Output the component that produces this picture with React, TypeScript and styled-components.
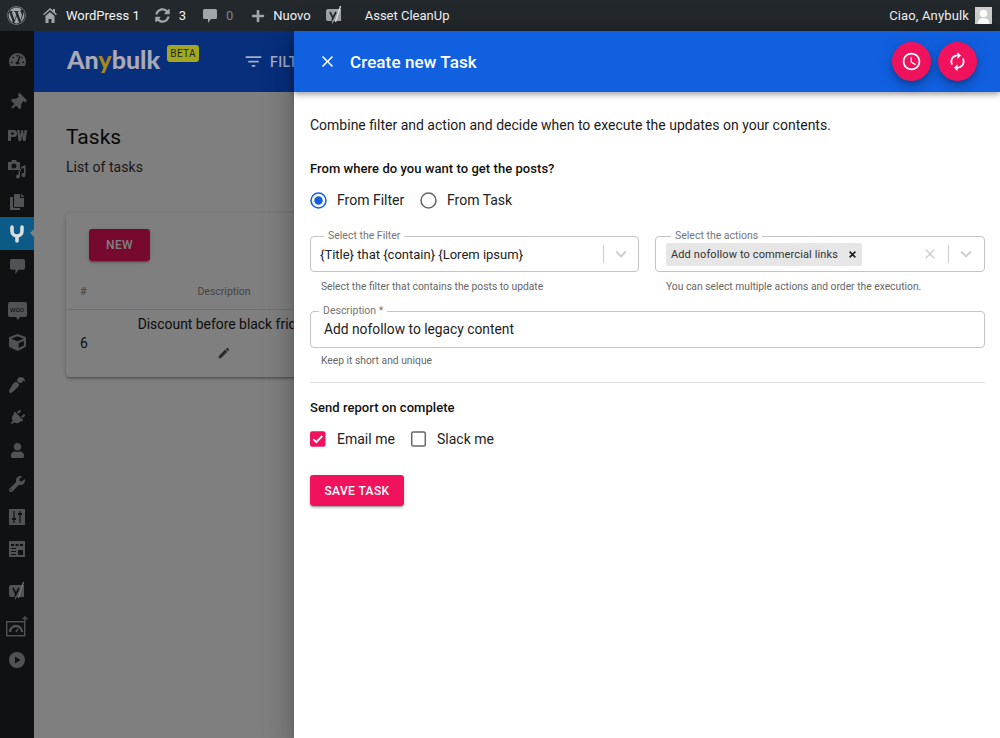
import React from "react";
import styled, { createGlobalStyle } from "styled-components";
import {
  FaCopy,
  FaCube,
  FaPaintBrush,
  FaPlug,
  FaPlus,
  FaSyncAlt,
  FaTachometerAlt,
  FaThumbtack,
  FaUser,
  FaWordpress,
  FaWrench,
} from "react-icons/fa";
import { MdAccessTime, MdAutorenew, MdClose, MdEdit, MdFilterList, MdKeyboardArrowDown } from "react-icons/md";

const GlobalStyle = createGlobalStyle`
  html, body {
    margin: 0;
    padding: 0;
    background: #fff;
    font-family: Roboto, "Liberation Sans", sans-serif;
  }
`;

const Page = styled.div`
  position: relative;
  width: 1000px;
  height: 738px;
  overflow: hidden;
  display: flex;
  flex-direction: column;
`;

const AdminBar = styled.div`
  height: 31px;
  flex: none;
  background: #23282d;
  display: flex;
  align-items: center;
  color: #f1f2f3;
  font-size: 13px;
  padding: 0 8px 0 7px;
`;

const BarItem = styled.span<{ $left?: number; $muted?: boolean }>`
  display: inline-flex;
  align-items: center;
  margin-left: ${props => props.$left ?? 0}px;
  color: ${props => (props.$muted ? "#7d8287" : "#f1f2f3")};
  svg {
    display: block;
    color: #a0a5aa;
  }
`;

const BarRight = styled.div`
  margin-left: auto;
  display: flex;
  align-items: center;
  gap: 6px;
  letter-spacing: 0.15px;
`;

const Avatar = styled.span`
  width: 17px;
  height: 17px;
  background: #cfcfcf;
  display: block;
  svg {
    display: block;
  }
`;

const Body = styled.div`
  flex: 1;
  display: flex;
  min-height: 0;
`;

const Sidebar = styled.nav`
  width: 34px;
  flex: none;
  background: #1f2327;
  padding-top: 12px;
  display: flex;
  flex-direction: column;
`;

const SideItem = styled.div<{ $top?: number; $active?: boolean; $tilt?: number }>`
  position: relative;
  z-index: ${props => (props.$active ? 2 : "auto")};
  height: 33px;
  flex: none;
  margin-top: ${props => props.$top ?? 0}px;
  display: flex;
  align-items: center;
  justify-content: center;
  background: ${props => (props.$active ? "#0c5a86" : "transparent")};
  color: ${props => (props.$active ? "#d8dde0" : "#a0a5aa")};
  svg {
    display: block;
    transform: rotate(${props => props.$tilt ?? 0}deg);
  }
`;

const ActiveArrow = styled.span`
  position: absolute;
  right: 0;
  top: 12px;
  border: 4px solid transparent;
  border-right-color: #7f7f7f;
  border-left-width: 0;
`;

const WooTag = styled.span`
  position: relative;
  font-family: "Liberation Sans", sans-serif;
  font-size: 7.5px;
  line-height: 15px;
  width: 19px;
  height: 15px;
  border-radius: 2px;
  background: #a0a5aa;
  color: #1f2327;
  text-align: center;
  &::after {
    content: "";
    position: absolute;
    left: 8px;
    bottom: -3px;
    border: 2px solid transparent;
    border-top-color: #a0a5aa;
    border-bottom-width: 0;
    border-top-width: 3px;
  }
`;

const Main = styled.main`
  flex: 1;
  min-width: 0;
  background: #fff;
  display: flex;
  flex-direction: column;
`;

const TopBar = styled.header`
  height: 61px;
  flex: none;
  background: #105ef8;
  display: flex;
  align-items: center;
  padding-left: 33px;
  color: #fff;
`;

// the logo stays brighter than the rest under the scrim
const Logo = styled.div`
  position: relative;
  z-index: 2;
  margin-bottom: 5px;
  font-family: Lato, sans-serif;
  font-weight: 900;
  font-size: 25px;
  color: #a9aab6;
  span {
    color: #a8861a;
  }
`;

const BetaBadge = styled.span`
  position: relative;
  z-index: 2;
  align-self: flex-start;
  margin: 14px 0 0 7px;
  width: 32px;
  height: 17px;
  border-radius: 3px;
  background: #a3a61f;
  color: #1c2a28;
  font-size: 10px;
  letter-spacing: 0.4px;
  line-height: 17px;
  text-align: center;
`;

const FilterLink = styled.div`
  position: relative;
  z-index: 2;
  display: flex;
  align-items: center;
  gap: 6px;
  margin-left: 44px;
  font-size: 14px;
  font-weight: 500;
  letter-spacing: 0.4px;
  white-space: nowrap;
  color: #a4adc6;
`;

const Content = styled.div`
  padding: 31px 0 0 32px;
`;

const PageTitle = styled.h1`
  margin: 0;
  font-size: 21px;
  line-height: 28px;
  font-weight: 400;
  color: #111;
`;

const PageSub = styled.p`
  margin: 6px 0 0;
  font-size: 14px;
  line-height: 20px;
  letter-spacing: 0.05px;
  color: #333;
`;

const Card = styled.section`
  margin-top: 36px;
  width: 520px;
  height: 164px;
  background: #fff;
  border-radius: 4px;
  box-shadow: 0 2px 2px rgba(0, 0, 0, 0.14), 0 3px 1px -2px rgba(0, 0, 0, 0.12), 0 1px 5px rgba(0, 0, 0, 0.2);
  padding-top: 16px;
  box-sizing: border-box;
`;

const NewButton = styled.button`
  display: block;
  margin-left: 23px;
  width: 61px;
  height: 32px;
  border: 0;
  border-radius: 3px;
  background: #f0125c;
  color: #fff;
  font: 500 12px Roboto, sans-serif;
  letter-spacing: 0.3px;
  box-shadow: 0 3px 1px -2px rgba(0, 0, 0, 0.2), 0 2px 2px rgba(0, 0, 0, 0.14), 0 1px 5px rgba(0, 0, 0, 0.12);
`;

const TableHead = styled.div`
  box-sizing: border-box;
  margin-top: 16px;
  height: 33px;
  padding: 0 0 4px 14px;
  display: grid;
  grid-template-columns: 58px 172px;
  align-items: center;
  border-bottom: 1px solid #e0e0e0;
  font-size: 10.5px;
  color: #8a8a8a;
`;

const TableRow = styled.div`
  height: 66px;
  display: grid;
  grid-template-columns: 58px 172px;
  align-items: center;
  padding-left: 14px;
  font-size: 13.9px;
  color: #1c1c1c;
`;

const HeadLabel = styled.span`
  text-align: center;
`;

const DescCell = styled.div`
  display: flex;
  flex-direction: column;
  align-items: center;
  gap: 12px;
  padding-bottom: 12px;
  line-height: 20px;
  white-space: nowrap;
  svg {
    display: block;
    color: #555;
  }
`;

const Scrim = styled.div`
  position: absolute;
  inset: 31px 0 0 0;
  z-index: 1;
  background: rgba(0, 0, 0, 0.5);
`;

const Drawer = styled.aside`
  position: absolute;
  z-index: 3;
  top: 31px;
  left: 294px;
  right: 0;
  bottom: 0;
  background: #fff;
  box-shadow: 0 8px 10px -5px rgba(0, 0, 0, 0.2), 0 16px 24px 2px rgba(0, 0, 0, 0.14), 0 6px 30px 5px rgba(0, 0, 0, 0.12);
`;

const DrawerHead = styled.header`
  height: 61px;
  background: #1160e0;
  display: flex;
  align-items: center;
  padding: 0 23px 0 24px;
  color: #fff;
  box-shadow: 0 2px 4px -1px rgba(0, 0, 0, 0.2), 0 4px 5px rgba(0, 0, 0, 0.14), 0 1px 10px rgba(0, 0, 0, 0.12);
  svg {
    display: block;
  }
`;

const DrawerTitle = styled.h2`
  margin: 0 0 0 13px;
  font-size: 17px;
  font-weight: 500;
  letter-spacing: 0.1px;
`;

const Fabs = styled.div`
  margin-left: auto;
  display: flex;
  gap: 7px;
`;

const Fab = styled.button`
  width: 39px;
  height: 39px;
  border: 0;
  padding: 0;
  border-radius: 50%;
  background: #f0125c;
  color: #fff;
  display: flex;
  align-items: center;
  justify-content: center;
  box-shadow: 0 3px 5px -1px rgba(0, 0, 0, 0.2), 0 6px 10px rgba(0, 0, 0, 0.14), 0 1px 18px rgba(0, 0, 0, 0.12);
`;

const Form = styled.div`
  padding: 23px 15px 0 16px;
`;

const Intro = styled.p`
  margin: 0;
  font-size: 14px;
  line-height: 20px;
  color: #1b1b1b;
`;

const SectionTitle = styled.h3<{ $top: number }>`
  margin: ${props => props.$top}px 0 0;
  font-size: 13px;
  line-height: 20px;
  font-weight: 500;
  letter-spacing: 0.05px;
  color: #111;
`;

const OptionRow = styled.div`
  margin-top: 9px;
  height: 24px;
  display: flex;
  align-items: center;
`;

const Option = styled.label<{ $width: number }>`
  width: ${props => props.$width}px;
  display: flex;
  align-items: center;
  gap: 10px;
  font-size: 14px;
  color: #222;
  svg {
    display: block;
    flex: none;
  }
`;

const FieldRow = styled.div`
  margin-top: 18px;
  display: grid;
  grid-template-columns: 329px 330px;
  justify-content: space-between;
`;

const Outlined = styled.fieldset<{ $top?: number }>`
  margin: ${props => props.$top ?? 0}px 0 0;
  padding: 0;
  min-width: 0;
  border: 1px solid #c4c4c4;
  border-radius: 4px;
`;

const Legend = styled.legend<{ $left: number }>`
  margin-left: ${props => props.$left}px;
  padding: 0 4px;
  font-size: 10.5px;
  line-height: 12px;
  color: #757575;
`;

const SelectBody = styled.div`
  box-sizing: border-box;
  height: 31px;
  margin-top: -2px;
  padding: 0 0 3px 9px;
  display: flex;
  align-items: center;
  font-size: 13px;
  color: #222;
`;

const Chip = styled.span`
  display: flex;
  align-items: center;
  justify-content: space-between;
  width: 196px;
  box-sizing: border-box;
  height: 23px;
  padding: 0 6px 0 5px;
  margin-left: 1px;
  border-radius: 2px;
  background: #e6e6e6;
  font-size: 11px;
  letter-spacing: 0.12px;
  color: #333;
  svg {
    display: block;
  }
`;

const Indicators = styled.div<{ $end: number }>`
  margin-left: auto;
  padding-right: ${props => props.$end}px;
  display: flex;
  align-items: center;
  color: #cccccc;
  svg {
    display: block;
  }
`;

const Separator = styled.span`
  width: 1px;
  height: 18px;
  background: #cccccc;
  margin: 0 6px 0 7px;
`;

const ClearIcon = styled(MdClose)`
  margin-right: 3px;
`;

const Helper = styled.p<{ $top?: number; $left?: number }>`
  margin: ${props => props.$top ?? 8}px 0 0 ${props => props.$left ?? 11}px;
  font-size: 10.3px;
  line-height: 14px;
  color: #666;
`;

const TextValue = styled.div`
  box-sizing: border-box;
  height: 33px;
  margin-top: -3px;
  padding: 0 0 3px 13px;
  display: flex;
  align-items: center;
  font-size: 13.8px;
  color: #1c1c1c;
`;

const Divider = styled.hr`
  margin: 14px 0 0;
  border: 0;
  height: 1px;
  background: #e0e0e0;
`;

const SaveButton = styled.button`
  display: block;
  margin-top: 24px;
  width: 94px;
  height: 31px;
  border: 0;
  border-radius: 3px;
  background: #f0125c;
  color: #fff;
  font: 500 12px Roboto, sans-serif;
  letter-spacing: 0.4px;
  box-shadow: 0 3px 1px -2px rgba(0, 0, 0, 0.2), 0 2px 2px rgba(0, 0, 0, 0.14), 0 1px 5px rgba(0, 0, 0, 0.12);
`;

function Radio({ checked }: { checked?: boolean }) {
  const color = checked ? "#1160e0" : "#666";
  return (
    <svg width="17" height="17" viewBox="0 0 17 17">
      <circle cx="8.5" cy="8.5" r="7.5" fill="none" stroke={color} strokeWidth="1.5" />
      {checked && <circle cx="8.5" cy="8.5" r="4.2" fill={color} />}
    </svg>
  );
}

function Checkbox({ checked }: { checked?: boolean }) {
  if (checked) {
    return (
      <svg width="17" height="16" viewBox="0 0 17 16">
        <rect y="0.3" width="15.5" height="15.5" rx="2" fill="#f0125c" />
        <path d="M3.3 8.2l3 3 6-6.2" fill="none" stroke="#fff" strokeWidth="1.8" />
      </svg>
    );
  }
  return (
    <svg width="17" height="16" viewBox="0 0 17 16">
      <rect x="1.7" y="1" width="13.6" height="14" rx="1.5" fill="none" stroke="#666" strokeWidth="1.5" />
    </svg>
  );
}

function ChipCross() {
  return (
    <svg width="7" height="7" viewBox="0 0 7 7" fill="none" stroke="#1c1c1c" strokeWidth="1.6">
      <path d="M.6.6l5.800 5.800M6.400.6L.6 6.400" />
    </svg>
  );
}

function HomeMark() {
  return (
    <svg width="14" height="15" viewBox="0 0 14 15" fill="currentColor">
      <path d="M7 0l3 2.600V1h2v3.400L14 6.200l-1 1.100L7 2 1 7.300 0 6.200z" />
      <path d="M2.500 8L7 4l4.500 4v7H8.500v-4h-3v4h-3z" />
    </svg>
  );
}

function BubbleMark({ size }: { size: number }) {
  return (
    <svg width={size} height={size} viewBox="0 0 14 14" fill="currentColor">
      <path d="M1.500 0h11A1.500 1.500 0 0114 1.500v7a1.500 1.500 0 01-1.500 1.500H8l-3 4v-4H1.500A1.500 1.500 0 010 8.500v-7A1.500 1.500 0 011.500 0z" />
    </svg>
  );
}

function YoastMark({ back }: { back: string }) {
  return (
    <svg width="17" height="19" viewBox="0 0 17 19">
      <path d="M2 3h13v12H8l-2 3v-3H2a2 2 0 01-2-2V5a2 2 0 012-2z" fill="currentColor" />
      <path d="M4 6l3 6 3-6M7 12l-1 2.500" fill="none" stroke={back} strokeWidth="1.700" />
      <path d="M14.500 0L9.500 16" fill="none" stroke="#e8e8e8" strokeWidth="1.300" />
    </svg>
  );
}

function ProfileMark() {
  return (
    <svg width="17" height="17" viewBox="0 0 17 17" fill="#fff">
      <circle cx="8.5" cy="6.500" r="3.800" />
      <path d="M2.500 17c0-4 2.500-6 6-6s6 2 6 6z" />
    </svg>
  );
}

function PwMark() {
  return (
    <svg width="19" height="11" viewBox="0 0 19 11" fill="currentColor">
      <path fillRule="evenodd" d="M0 0h5.500a3.500 3.500 0 010 7H3v4H0zM3 2.500V4.600h2.200a1 1 0 000-2.100z" />
      <path d="M9 0h2.500l.7 6 1.100-6h1.600l1.100 6 .5-6H19l-1.500 11h-2.300l-1.100-5.500L13 11h-2.300z" />
    </svg>
  );
}

function MediaMark() {
  return (
    <svg width="20" height="20" viewBox="0 0 20 20" fill="currentColor">
      <path d="M1 3h3l1-2h4l1 2h3v8H1zm6 1.500a2.500 2.500 0 100 5 2.500 2.500 0 000-5z" />
      <path d="M18.500 6v10a2 2 0 11-1.500-1.900V9l-4 1v7.500a2 2 0 11-1.500-1.900V12H14V8z" />
    </svg>
  );
}

function AnybulkMark() {
  return (
    <svg width="14" height="18" viewBox="0 0 14 18" fill="none" stroke="currentColor" strokeWidth="3.600" strokeLinecap="round">
      <path d="M2 2v4a5 5 0 0010 0V2M7 11v5" />
    </svg>
  );
}

function SlidersMark() {
  return (
    <svg width="16" height="16" viewBox="0 0 16 16">
      <rect width="16" height="16" fill="currentColor" />
      <path d="M5 2v12M11 2v12" stroke="#1f2327" strokeWidth="1.200" />
      <path d="M3 9h4v2H3zM9 4h4v2H9z" fill="#1f2327" />
    </svg>
  );
}

function TableMark() {
  return (
    <svg width="16" height="16" viewBox="0 0 16 16">
      <rect width="16" height="16" fill="currentColor" />
      <path d="M2 3h3v2H2zM6.500 3h3v2h-3zM11 3h3v2h-3zM2 7h5v1H2zM2 10h5v1H2zM2 13h5v1H2zM9 9h5v5H9z" fill="#1f2327" />
    </svg>
  );
}

function GaugeMark() {
  return (
    <svg width="22" height="21" viewBox="0 0 22 21" fill="none" stroke="currentColor">
      <rect x="0.700" y="5.700" width="18" height="14" strokeWidth="1.400" />
      <path d="M4 16a6 6 0 0112 0" strokeWidth="2.400" />
      <path d="M10 16l2-3" strokeWidth="1.400" />
      <path d="M19 0v5M16.500 2.500h5" strokeWidth="1.400" />
    </svg>
  );
}

function PlayMark() {
  return (
    <svg width="16" height="16" viewBox="0 0 16 16">
      <circle cx="8" cy="8" r="8" fill="currentColor" />
      <path d="M6 4.500L11.500 8 6 11.500z" fill="#1f2327" />
    </svg>
  );
}

const Chevron = () => <MdKeyboardArrowDown size={22} />;

export default function App() {
  return (
    <>
      <GlobalStyle />
      <Page>
        <AdminBar>
          <BarItem>
            <FaWordpress size={19} />
          </BarItem>
          <BarItem $left={17}>
            <HomeMark />
          </BarItem>
          <BarItem $left={9}>WordPress 1</BarItem>
          <BarItem $left={15}>
            <FaSyncAlt size={15} />
          </BarItem>
          <BarItem $left={9}>3</BarItem>
          <BarItem $left={17}>
            <BubbleMark size={14} />
          </BarItem>
          <BarItem $left={9} $muted>
            0
          </BarItem>
          <BarItem $left={18}>
            <FaPlus size={14} />
          </BarItem>
          <BarItem $left={8}>Nuovo</BarItem>
          <BarItem $left={15}>
            <YoastMark back="#23282d" />
          </BarItem>
          <BarItem $left={22}>Asset CleanUp</BarItem>
          <BarRight>
            <span>Ciao, Anybulk</span>
            <Avatar>
              <ProfileMark />
            </Avatar>
          </BarRight>
        </AdminBar>
        <Body>
          <Sidebar>
            <SideItem>
              <FaTachometerAlt size={17} />
            </SideItem>
            <SideItem $top={10} $tilt={45}>
              <FaThumbtack size={17} />
            </SideItem>
            <SideItem>
              <PwMark />
            </SideItem>
            <SideItem>
              <MediaMark />
            </SideItem>
            <SideItem>
              <FaCopy size={16} />
            </SideItem>
            <SideItem $active $top={-1}>
              <AnybulkMark />
              <ActiveArrow />
            </SideItem>
            <SideItem>
              <BubbleMark size={15} />
            </SideItem>
            <SideItem $top={10}>
              <WooTag>woo</WooTag>
            </SideItem>
            <SideItem>
              <FaCube size={17} />
            </SideItem>
            <SideItem $top={9} $tilt={180}>
              <FaPaintBrush size={16} />
            </SideItem>
            <SideItem $tilt={45}>
              <FaPlug size={16} />
            </SideItem>
            <SideItem>
              <FaUser size={15} />
            </SideItem>
            <SideItem>
              <FaWrench size={16} />
            </SideItem>
            <SideItem>
              <SlidersMark />
            </SideItem>
            <SideItem $top={-1}>
              <TableMark />
            </SideItem>
            <SideItem $top={10}>
              <YoastMark back="#1f2327" />
            </SideItem>
            <SideItem $top={2}>
              <GaugeMark />
            </SideItem>
            <SideItem>
              <PlayMark />
            </SideItem>
          </Sidebar>
          <Main>
            <TopBar>
              <Logo>
                An<span>y</span>bulk
              </Logo>
              <BetaBadge>BETA</BetaBadge>
              <FilterLink>
                <MdFilterList size={21} />
                FILTERS
              </FilterLink>
            </TopBar>
            <Content>
              <PageTitle>Tasks</PageTitle>
              <PageSub>List of tasks</PageSub>
              <Card>
                <NewButton>NEW</NewButton>
                <TableHead>
                  <span>#</span>
                  <HeadLabel>Description</HeadLabel>
                </TableHead>
                <TableRow>
                  <span>6</span>
                  <DescCell>
                    Discount before black friday
                    <MdEdit size={14} />
                  </DescCell>
                </TableRow>
              </Card>
            </Content>
          </Main>
        </Body>
        <Scrim />
        <Drawer>
          <DrawerHead>
            <MdClose size={19} />
            <DrawerTitle>Create new Task</DrawerTitle>
            <Fabs>
              <Fab>
                <MdAccessTime size={21} />
              </Fab>
              <Fab>
                <MdAutorenew size={21} />
              </Fab>
            </Fabs>
          </DrawerHead>
          <Form>
            <Intro>Combine filter and action and decide when to execute the updates on your contents.</Intro>
            <SectionTitle $top={24}>From where do you want to get the posts?</SectionTitle>
            <OptionRow>
              <Option $width={110}>
                <Radio checked />
                From Filter
              </Option>
              <Option $width={110}>
                <Radio />
                From Task
              </Option>
            </OptionRow>
            <FieldRow>
              <div>
                <Outlined>
                  <Legend $left={13}>Select the Filter</Legend>
                  <SelectBody>
                    {"{Title} that {contain} {Lorem ipsum}"}
                    <Indicators $end={6}>
                      <Separator />
                      <Chevron />
                    </Indicators>
                  </SelectBody>
                </Outlined>
                <Helper>Select the filter that contains the posts to update</Helper>
              </div>
              <div>
                <Outlined>
                  <Legend $left={15}>Select the actions</Legend>
                  <SelectBody>
                    <Chip>
                      Add nofollow to commercial links
                      <ChipCross />
                    </Chip>
                    <Indicators $end={7}>
                      <ClearIcon size={16} />
                      <Separator />
                      <Chevron />
                    </Indicators>
                  </SelectBody>
                </Outlined>
                <Helper>You can select multiple actions and order the execution.</Helper>
              </div>
            </FieldRow>
            <Outlined $top={11}>
              <Legend $left={8}>Description *</Legend>
              <TextValue>Add nofollow to legacy content</TextValue>
            </Outlined>
            <Helper $top={6}>Keep it short and unique</Helper>
            <Divider />
            <SectionTitle $top={15}>Send report on complete</SectionTitle>
            <OptionRow>
              <Option $width={100}>
                <Checkbox checked />
                Email me
              </Option>
              <Option $width={100}>
                <Checkbox />
                Slack me
              </Option>
            </OptionRow>
            <SaveButton>SAVE TASK</SaveButton>
          </Form>
        </Drawer>
      </Page>
    </>
  );
}
